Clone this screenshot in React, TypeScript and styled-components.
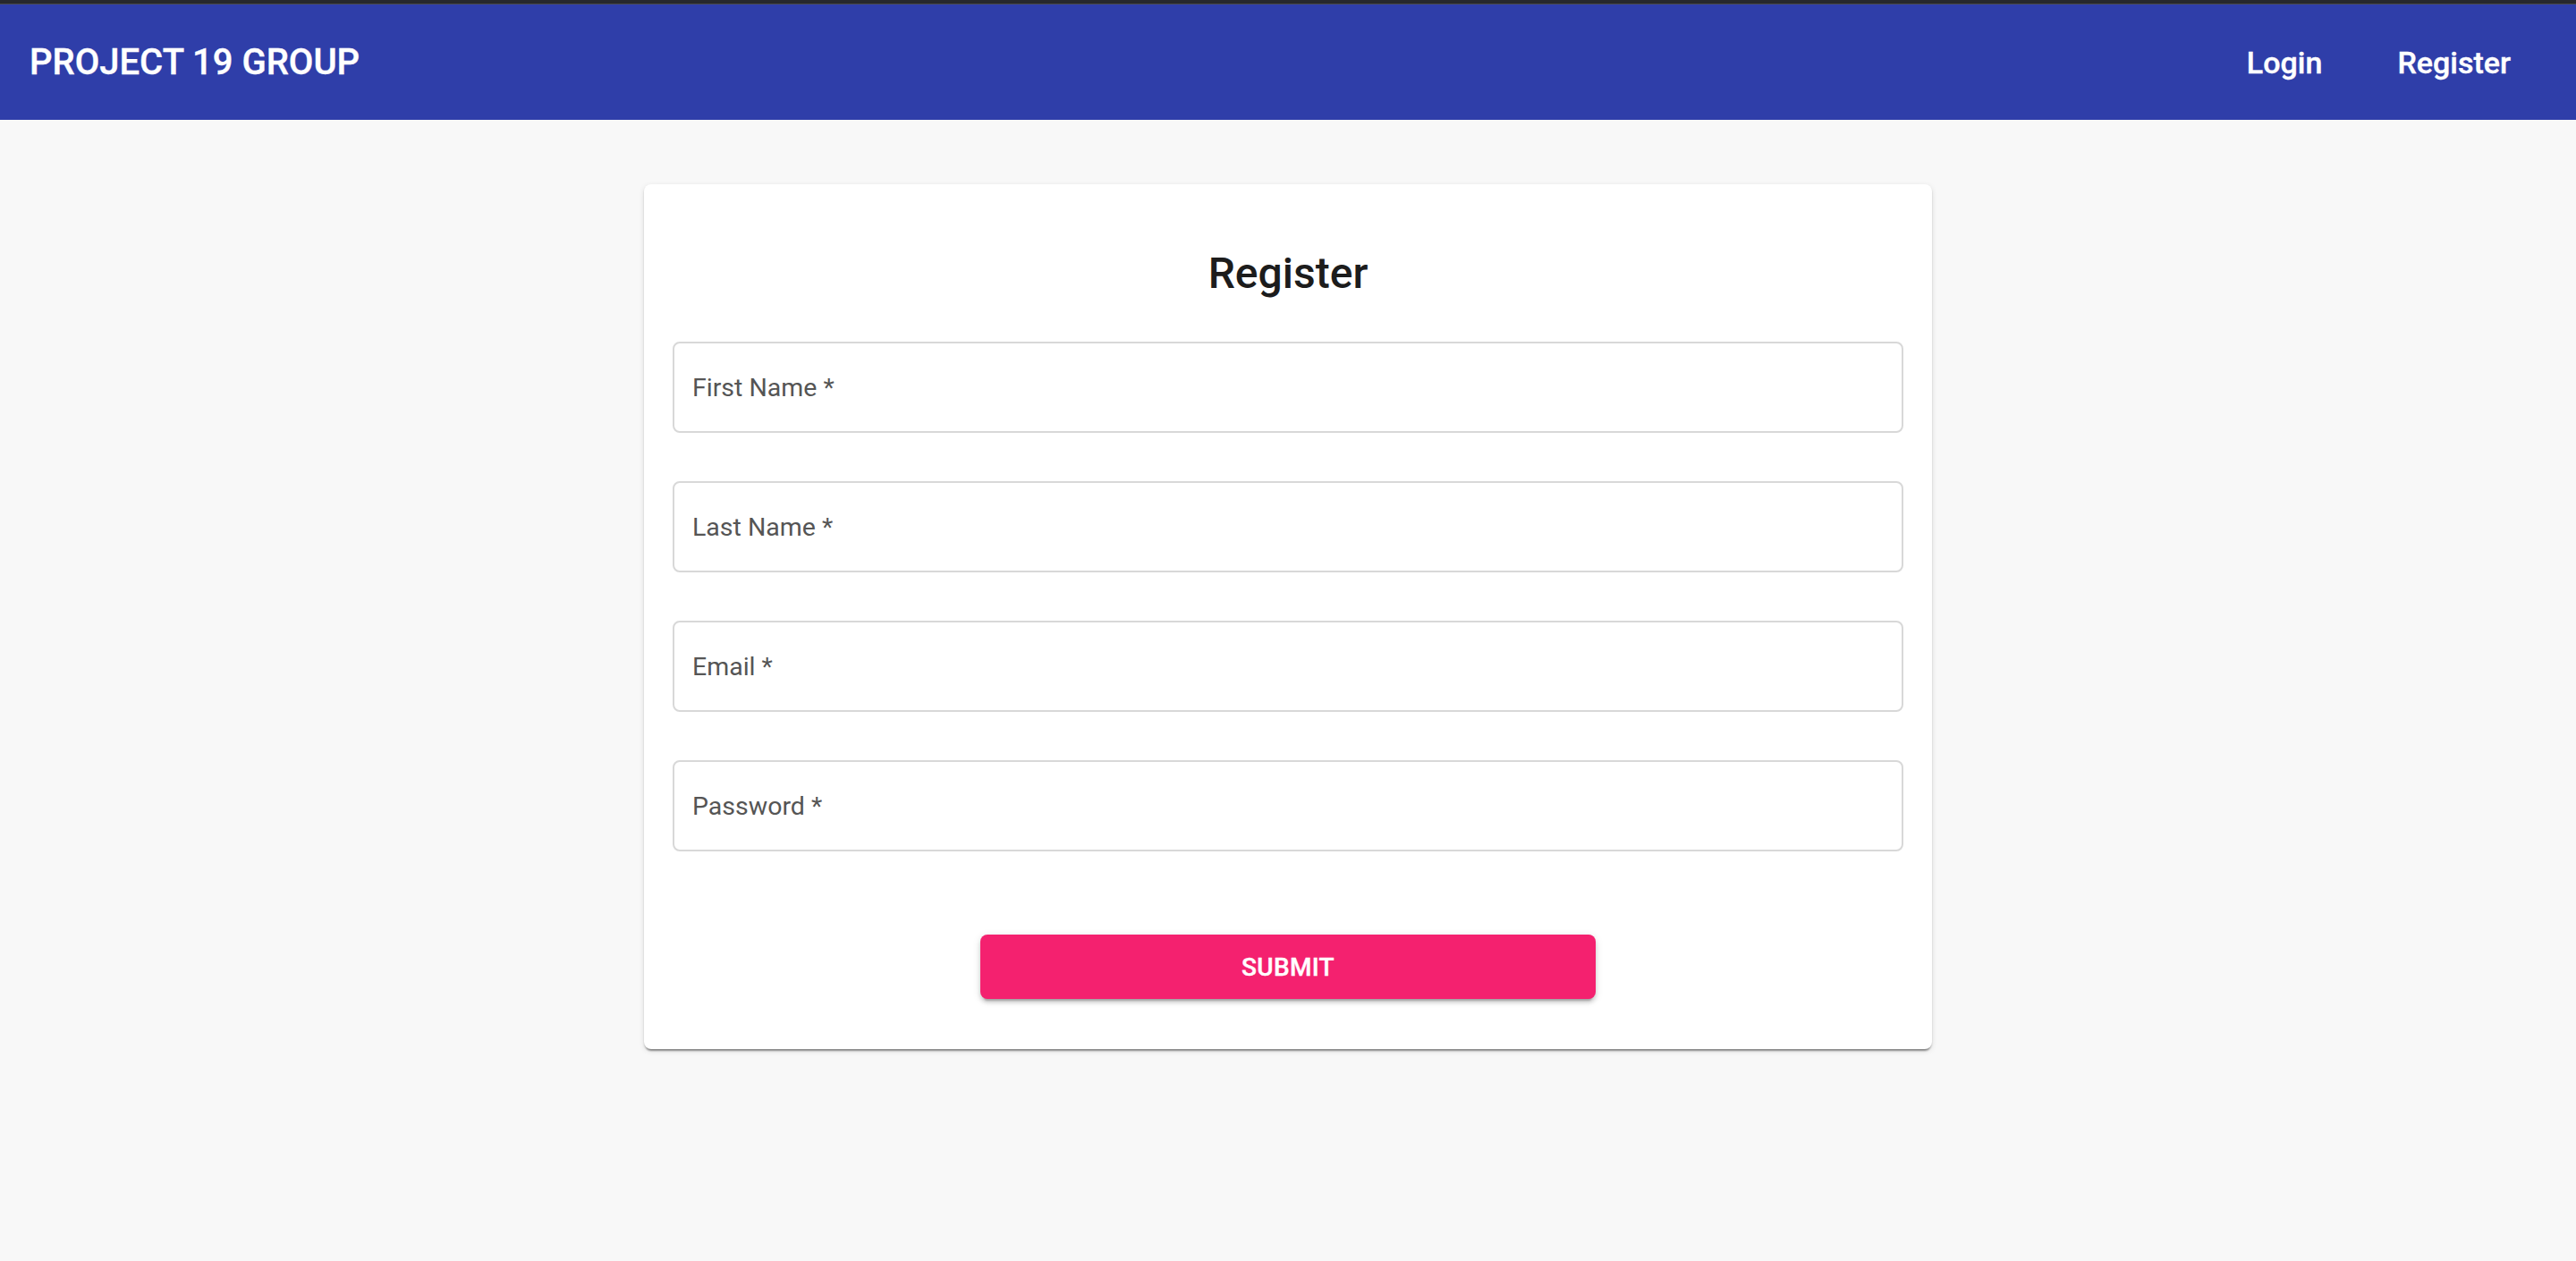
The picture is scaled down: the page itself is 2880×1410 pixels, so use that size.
import React from "react";
import styled, { createGlobalStyle } from "styled-components";

const GlobalStyle = createGlobalStyle`
  html, body {
    margin: 0;
    padding: 0;
    background: #f8f8f8;
    font-family: Roboto, "Liberation Sans", Arial, sans-serif;
  }
  * { box-sizing: border-box; }
`;

const Page = styled.div`
  min-height: 1410px;
  background: #f8f8f8;
`;

const TopStrip = styled.div`
  height: 5px;
  background: #27282c;
  border-bottom: 1px solid #4a4a4d;
`;

const AppBar = styled.header`
  height: 129px;
  background: #2f3ea9;
  display: flex;
  align-items: center;
  justify-content: space-between;
  padding: 0 73px 0 33px;
  color: #fff;
`;

const Brand = styled.div`
  font-size: 40px;
  font-weight: 500;
  line-height: 1;
  -webkit-text-stroke: 0.4px #fff;
`;

const Nav = styled.nav`
  display: flex;
  align-items: center;
  gap: 84px;
`;

const NavLink = styled.a`
  font-size: 34px;
  font-weight: 500;
  color: #fff;
  text-decoration: none;
  line-height: 1;
  cursor: pointer;
  -webkit-text-stroke: 0.4px #fff;
`;

const Main = styled.main`
  display: flex;
  justify-content: center;
  padding-top: 72px;
`;

const Card = styled.form`
  width: 1440px;
  background: #fff;
  border-radius: 8px;
  padding: 68px 32px 56px;
  display: flex;
  flex-direction: column;
  align-items: center;
  box-shadow: 0 4px 2px -2px rgba(0, 0, 0, 0.3), 0 2px 2px rgba(0, 0, 0, 0.14),
    0 2px 6px rgba(0, 0, 0, 0.12);
`;

const Title = styled.h1`
  margin: 0 0 44px;
  font-size: 48px;
  line-height: 64px;
  font-weight: 500;
  color: #1c1c1c;
`;

const Fields = styled.div`
  width: 100%;
  display: flex;
  flex-direction: column;
  gap: 54px;
`;

const Field = styled.label`
  height: 102px;
  border: 2px solid #d8d8d8;
  border-radius: 8px;
  display: flex;
  align-items: center;
  padding: 3px 20px 0;
  background: #fff;
`;

const FieldLabel = styled.span`
  font-size: 28.5px;
  color: #555555;
  line-height: 1;
`;

const SubmitButton = styled.button`
  margin-top: 93px;
  width: 688px;
  height: 72px;
  border: none;
  border-radius: 8px;
  background: #f4216f;
  color: #fff;
  font-family: Roboto, "Liberation Sans", Arial, sans-serif;
  font-size: 28px;
  font-weight: 500;
  letter-spacing: 0.3px;
  text-transform: uppercase;
  cursor: pointer;
  -webkit-text-stroke: 0.4px #fff;
  box-shadow: 0 6px 2px -4px rgba(0, 0, 0, 0.2), 0 4px 4px rgba(0, 0, 0, 0.14),
    0 2px 10px rgba(0, 0, 0, 0.12);
`;

const fields = ["First Name *", "Last Name *", "Email *", "Password *"];

export default function App() {
  return (
    <Page>
      <GlobalStyle />
      <TopStrip />
      <AppBar>
        <Brand>PROJECT 19 GROUP</Brand>
        <Nav>
          <NavLink>Login</NavLink>
          <NavLink>Register</NavLink>
        </Nav>
      </AppBar>
      <Main>
        <Card onSubmit={(e) => e.preventDefault()}>
          <Title>Register</Title>
          <Fields>
            {fields.map((f) => (
              <Field key={f}>
                <FieldLabel>{f}</FieldLabel>
              </Field>
            ))}
          </Fields>
          <SubmitButton type="submit">Submit</SubmitButton>
        </Card>
      </Main>
    </Page>
  );
}
